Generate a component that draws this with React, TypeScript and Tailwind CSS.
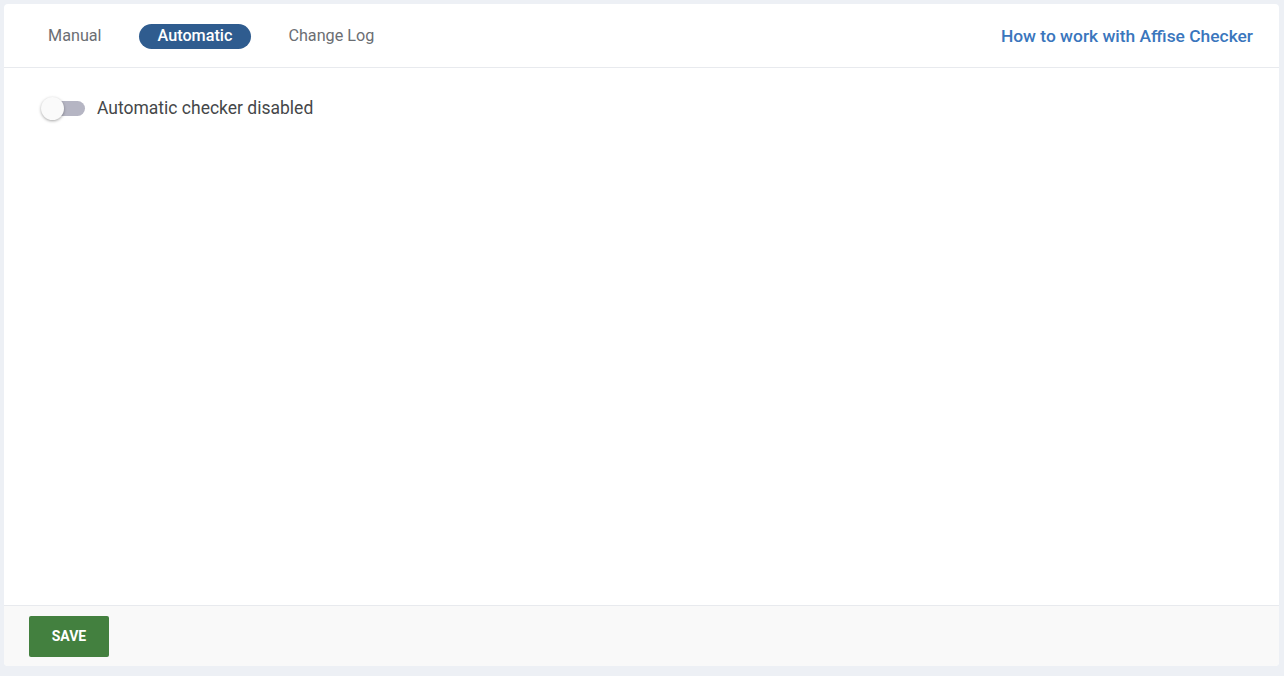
import { useState } from "react";

const tabs = ["Manual", "Automatic", "Change Log"];

export default function App() {
  const [active, setActive] = useState("Automatic");
  const [enabled, setEnabled] = useState(false);

  return (
    <div className="h-[676px] w-full bg-[#edf0f5] p-1 font-['Roboto',sans-serif]">
      <div className="flex h-[662px] w-[1275px] flex-col rounded bg-white">
        <div className="flex h-[64px] items-center justify-between border-b border-[#e8eaee] pl-[25px] pr-[26px] pt-[2px]">
          <div className="flex items-center gap-[18px]">
            {tabs.map((t) => (
              <button
                key={t}
                onClick={() => setActive(t)}
                className={
                  t === active
                    ? "h-[25px] rounded-full bg-[#2f5c8f] px-[19px] text-[16.2px] font-medium text-white"
                    : "h-[25px] rounded-full px-[19px] text-[16.2px] text-[#6b6e73]"
                }
              >
                {t}
              </button>
            ))}
          </div>
          <a href="#" className="text-[17.4px] font-medium text-[#3a76bd]">
            How to work with Affise Checker
          </a>
        </div>

        <div className="flex-1 px-[34px] pt-[27px]">
          <label className="flex cursor-pointer items-center gap-[12px]">
            <span
              onClick={() => setEnabled(!enabled)}
              className="relative flex h-[22px] w-[47px] items-center"
            >
              <span className="ml-[5px] h-[15px] w-[42px] rounded-full bg-[#b5b5c3]" />
              <span className="absolute left-[3px] top-0 h-[23px] w-[23px] rounded-full bg-[#fafafa] shadow-[0_1px_3px_rgba(0,0,0,0.35)]" />
            </span>
            <span className="text-[17.5px] text-[#454749]">
              Automatic checker {enabled ? "enabled" : "disabled"}
            </span>
          </label>
        </div>

        <div className="flex h-[61px] items-center rounded-b border-t border-[#e8eaee] bg-[#f9f9f9] px-[25px]">
          <button className="h-[41px] w-[80px] rounded-[2px] bg-[#43803f] text-[14px] font-bold text-white">
            SAVE
          </button>
        </div>
      </div>
    </div>
  );
}
